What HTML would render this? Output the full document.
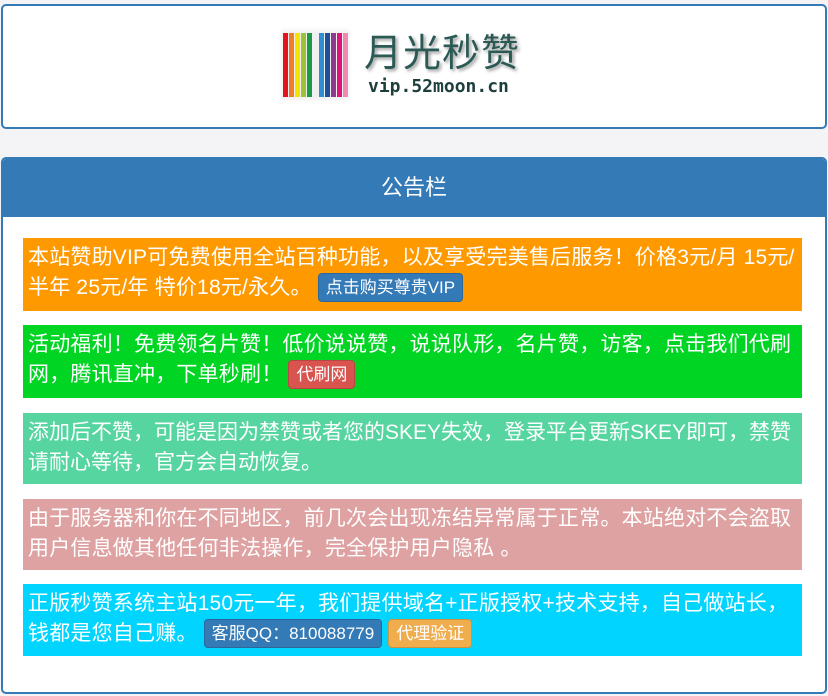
<!DOCTYPE html><html><head><meta charset="utf-8"><style>
body{margin:0;width:828px;height:696px;background:#f4f4f6;font-family:"Liberation Sans","Noto Sans CJK SC",sans-serif;position:relative;overflow:hidden}
.box1{position:absolute;left:1px;top:4px;width:822px;height:121px;border:2px solid #337ab7;border-radius:5px;background:#fff}
.box2{position:absolute;left:1px;top:157px;width:822px;height:533px;border:2px solid #337ab7;border-radius:5px;background:#fff;overflow:hidden}
.hd{height:58px;background:#337ab7;color:#fff;font-size:22px;text-align:center;line-height:58px}
.n{position:absolute;left:23px;width:779px;color:#fff;font-size:21px;letter-spacing:0.2px;line-height:30px;padding:5px 4px 5px 5px;box-sizing:border-box}
.b{display:inline-block;font-size:17px;letter-spacing:0;line-height:27px;padding:0 7px;border-radius:4px;border:1px solid rgba(0,0,0,.15);vertical-align:1px}
.st{position:absolute;top:33px;width:5px;height:64px}
</style></head><body>
<div class="box1"></div>
<div style="position:absolute;left:281px;top:30px;width:68px;height:70px;background:#f0f0f0;filter:blur(2px)"></div>
<div class="st" style="left:283px;background:#e3141b"></div>
<div class="st" style="left:289px;background:#ef7d2a"></div>
<div class="st" style="left:295px;background:#f5e400"></div>
<div class="st" style="left:301px;background:#9ac33a"></div>
<div class="st" style="left:307px;background:#1a9a44"></div>
<div class="st" style="left:319px;background:#2e8fd6"></div>
<div class="st" style="left:325px;background:#1f4f9a"></div>
<div class="st" style="left:331px;background:#8e3b8e"></div>
<div class="st" style="left:337px;background:#e0137b"></div>
<div class="st" style="left:343px;background:#ee8ab2"></div>
<div style="position:absolute;left:364px;top:32px;font-size:38px;line-height:44px;color:#2b5a55;text-shadow:2px 2px 3px #999;letter-spacing:1px">月光秒赞</div>
<div style="position:absolute;left:368px;top:76px;font-size:18px;font-weight:bold;color:#1d3f3c;font-family:'DejaVu Sans Mono',monospace">vip.52moon.cn</div>
<div class="box2"><div class="hd">公告栏</div></div>
<div class="n" style="top:238px;height:73px;background:#ff9900">本站赞助VIP可免费使用全站百种功能，以及享受完美售后服务！价格3元/月 15元/半年 25元/年 特价18元/永久。 <span class="b" style="background:#337ab7">点击购买尊贵VIP</span></div>
<div class="n" style="top:325px;height:73px;background:#00d524">活动福利！免费领名片赞！低价说说赞，说说队形，名片赞，访客，点击我们代刷网，腾讯直冲，下单秒刷！ <span class="b" style="background:#d9534f">代刷网</span></div>
<div class="n" style="top:413px;height:71px;background:#56d5a0;letter-spacing:0;white-space:nowrap">添加后不赞，可能是因为禁赞或者您的SKEY失效，登录平台更新SKEY即可，禁赞<br>请耐心等待，官方会自动恢复。</div>
<div class="n" style="top:499px;height:71px;background:#dfa2a2">由于服务器和你在不同地区，前几次会出现冻结异常属于正常。本站绝对不会盗取用户信息做其他任何非法操作，完全保护用户隐私 。</div>
<div class="n" style="top:584px;height:72px;background:#00d4ff">正版秒赞系统主站150元一年，我们提供域名+正版授权+技术支持，自己做站长，钱都是您自己赚。 <span class="b" style="background:#337ab7">客服QQ：810088779</span> <span class="b" style="background:#f0ad4e">代理验证</span></div>
</body></html>
